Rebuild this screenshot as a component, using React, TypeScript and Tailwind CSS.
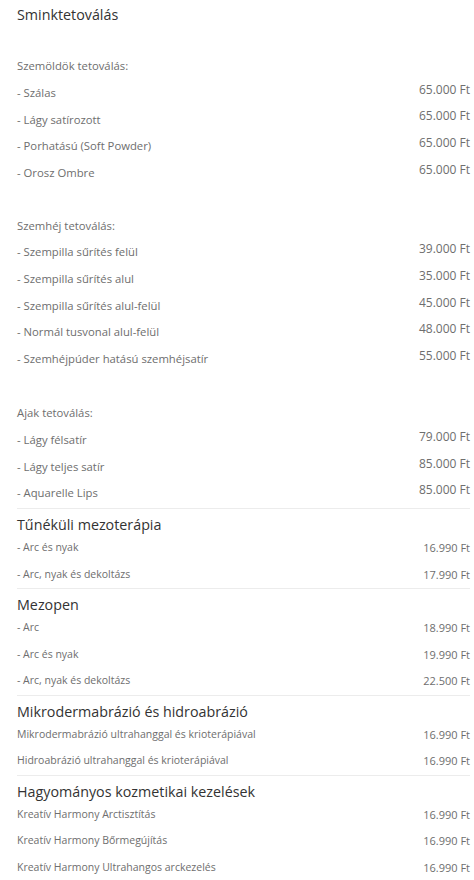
import React from "react";

type Row = [string, string];

const F = { fontFamily: '"Open Sans", "DejaVu Sans", sans-serif' };

function BigRow({ label, price }: { label: string; price?: string }) {
  return (
    <div className="flex h-[26.6px] items-center justify-between">
      <span className="pt-[4px] text-[11.3px] text-[#6e6e6e]">{label}</span>
      {price && <span className="pb-[3px] text-[12px] text-[#6e6e6e]">{price}</span>}
    </div>
  );
}

function SmallRow({ label, price }: { label: string; price: string }) {
  return (
    <div className="flex h-[26.5px] items-center justify-between">
      <span className="text-[10.5px] text-[#6e6e6e]">{label}</span>
      <span className="text-[11px] text-[#6e6e6e]">{price}</span>
    </div>
  );
}

function Section({ title, rows }: { title: string; rows: Row[] }) {
  return (
    <div className="border-t border-[#ececec]">
      <div className="h-[26px] pt-[6px] text-[14.3px] leading-[20px] text-[#333]">{title}</div>
      {rows.map(([l, p]) => (
        <SmallRow key={l} label={l} price={p} />
      ))}
    </div>
  );
}

export default function App() {
  return (
    <div className="w-[474px] h-[880px] overflow-hidden bg-white pl-[17px] pr-[4px]" style={F}>
      <div className="flex h-[30px] items-center text-[14.3px] text-[#333]">Sminktetoválás</div>
      <div className="h-[21.5px]" />
      <BigRow label="Szemöldök tetoválás:" />
      <BigRow label="- Szálas" price="65.000 Ft" />
      <BigRow label="- Lágy satírozott" price="65.000 Ft" />
      <BigRow label="- Porhatású (Soft Powder)" price="65.000 Ft" />
      <BigRow label="- Orosz Ombre" price="65.000 Ft" />
      <div className="h-[26.6px]" />
      <BigRow label="Szemhéj tetoválás:" />
      <BigRow label="- Szempilla sűrítés felül" price="39.000 Ft" />
      <BigRow label="- Szempilla sűrítés alul" price="35.000 Ft" />
      <BigRow label="- Szempilla sűrítés alul-felül" price="45.000 Ft" />
      <BigRow label="- Normál tusvonal alul-felül" price="48.000 Ft" />
      <BigRow label="- Szemhéjpúder hatású szemhéjsatír" price="55.000 Ft" />
      <div className="h-[28px]" />
      <BigRow label="Ajak tetoválás:" />
      <BigRow label="- Lágy félsatír" price="79.000 Ft" />
      <BigRow label="- Lágy teljes satír" price="85.000 Ft" />
      <BigRow label="- Aquarelle Lips" price="85.000 Ft" />
      <div className="h-[3px]" />
      <Section
        title="Tűnéküli mezoterápia"
        rows={[
          ["- Arc és nyak", "16.990 Ft"],
          ["- Arc, nyak és dekoltázs", "17.990 Ft"],
        ]}
      />
      <Section
        title="Mezopen"
        rows={[
          ["- Arc", "18.990 Ft"],
          ["- Arc és nyak", "19.990 Ft"],
          ["- Arc, nyak és dekoltázs", "22.500 Ft"],
        ]}
      />
      <Section
        title="Mikrodermabrázió és hidroabrázió"
        rows={[
          ["Mikrodermabrázió ultrahanggal és krioterápiával", "16.990 Ft"],
          ["Hidroabrázió ultrahanggal és krioterápiával", "16.990 Ft"],
        ]}
      />
      <Section
        title="Hagyományos kozmetikai kezelések"
        rows={[
          ["Kreatív Harmony Arctisztítás", "16.990 Ft"],
          ["Kreatív Harmony Bőrmegújítás", "16.990 Ft"],
          ["Kreatív Harmony Ultrahangos arckezelés", "16.990 Ft"],
        ]}
      />
    </div>
  );
}
